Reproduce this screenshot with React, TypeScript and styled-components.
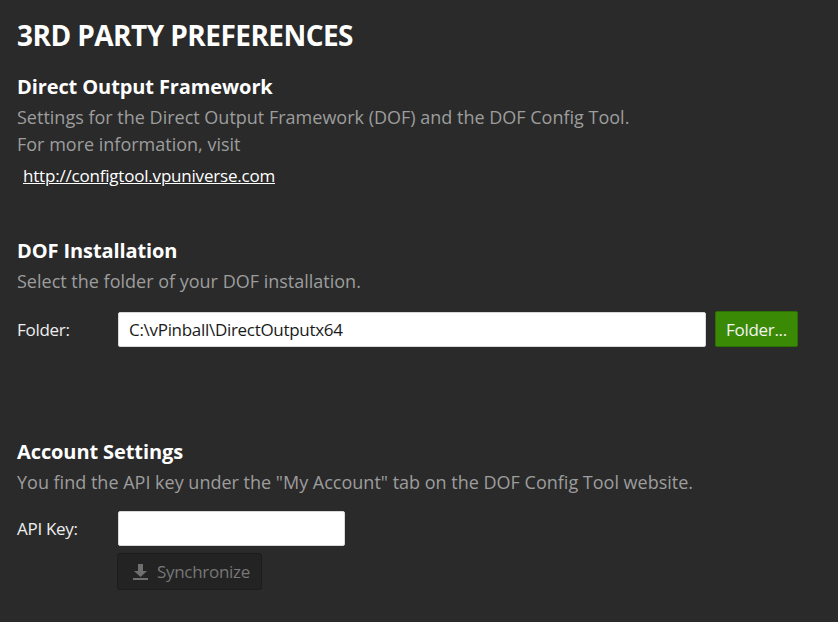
import React from "react";
import styled, { createGlobalStyle } from "styled-components";

const Global = createGlobalStyle`
  html, body { margin: 0; padding: 0; background: #2a2a2a; }
  body { font-family: "Open Sans", "Noto Sans", sans-serif; }
`;

const Page = styled.div`
  width: 838px;
  height: 622px;
  box-sizing: border-box;
  padding: 15px 0 0 17px;
  background: #2a2a2a;
  display: flex;
  flex-direction: column;
`;

const Title = styled.h1`
  margin: 0;
  font-size: 28px;
  line-height: 40px;
  font-weight: 700;
  color: #ffffff;
  letter-spacing: -0.55px;
`;

const Section = styled.section<{ $top: number }>`
  margin-top: ${(p) => p.$top}px;
  display: flex;
  flex-direction: column;
`;

const Heading = styled.h2`
  margin: 0;
  font-size: 20px;
  line-height: 28px;
  font-weight: 700;
  color: #ffffff;
  letter-spacing: -0.1px;
`;

const Desc = styled.p`
  margin: 3px 0 0;
  font-size: 18px;
  line-height: 27px;
  color: #9d9d9d;
`;

const Link = styled.a`
  margin: 4px 0 0 6px;
  font-size: 17px;
  line-height: 27px;
  color: #ffffff;
  text-decoration: underline;
  letter-spacing: -0.2px;
  align-self: flex-start;
`;

const Row = styled.div<{ $top: number }>`
  margin-top: ${(p) => p.$top}px;
  display: flex;
  align-items: center;
  gap: 9px;
`;

const Label = styled.span`
  width: 92px;
  font-size: 17px;
  color: #eeeeee;
  letter-spacing: -0.3px;
`;

const Input = styled.input<{ $w: number }>`
  width: ${(p) => p.$w}px;
  height: 35px;
  box-sizing: border-box;
  border: 1px solid #d8d8d8;
  border-radius: 2px;
  background: #ffffff;
  padding: 0 10px;
  font-family: "Open Sans", "Noto Sans", sans-serif;
  font-size: 17px;
  color: #1a1a1a;
  letter-spacing: -0.3px;
  outline: none;
`;

const GreenButton = styled.button`
  height: 36px;
  width: 83px;
  box-sizing: border-box;
  border: 1px solid #2c7000;
  border-radius: 2px;
  background: #3a8a05;
  color: #f4f4f4;
  font-family: "Open Sans", "Noto Sans", sans-serif;
  font-size: 17px;
  letter-spacing: -0.3px;
  padding: 0;
`;

const SyncRow = styled.div`
  margin-top: 7px;
  padding-left: 100px;
  display: flex;
`;

const SyncButton = styled.button`
  height: 37px;
  width: 145px;
  box-sizing: border-box;
  border: 1px solid #1c1c1c;
  border-radius: 3px;
  background: #232323;
  color: #777777;
  font-family: "Open Sans", "Noto Sans", sans-serif;
  font-size: 17px;
  letter-spacing: -0.3px;
  display: flex;
  align-items: center;
  gap: 9px;
  padding: 0 0 0 15px;
`;

const DownloadIcon = () => (
  <svg width="15" height="16" viewBox="0 0 15 16" fill="#6f6f6f">
    <rect x="5" y="0" width="5" height="7" />
    <polygon points="1,7 14,7 7.5,13" />
    <rect x="0" y="14" width="15" height="2" />
  </svg>
);

export default function App() {
  return (
    <>
      <Global />
      <Page>
        <Title>3RD PARTY PREFERENCES</Title>
        <Section $top={18}>
          <Heading>Direct Output Framework</Heading>
          <Desc>
            Settings for the Direct Output Framework (DOF) and the DOF Config Tool.
            <br />
            For more information, visit
          </Desc>
          <Link href="#">http://configtool.vpuniverse.com</Link>
        </Section>
        <Section $top={48}>
          <Heading>DOF Installation</Heading>
          <Desc>Select the folder of your DOF installation.</Desc>
          <Row $top={16}>
            <Label>Folder:</Label>
            <Input $w={588} defaultValue="C:\vPinball\DirectOutputx64" />
            <GreenButton>Folder...</GreenButton>
          </Row>
        </Section>
        <Section $top={91}>
          <Heading>Account Settings</Heading>
          <Desc>You find the API key under the "My Account" tab on the DOF Config Tool website.</Desc>
          <Row $top={15}>
            <Label>API Key:</Label>
            <Input $w={227} />
          </Row>
          <SyncRow>
            <SyncButton>
              <DownloadIcon />
              Synchronize
            </SyncButton>
          </SyncRow>
        </Section>
      </Page>
    </>
  );
}
